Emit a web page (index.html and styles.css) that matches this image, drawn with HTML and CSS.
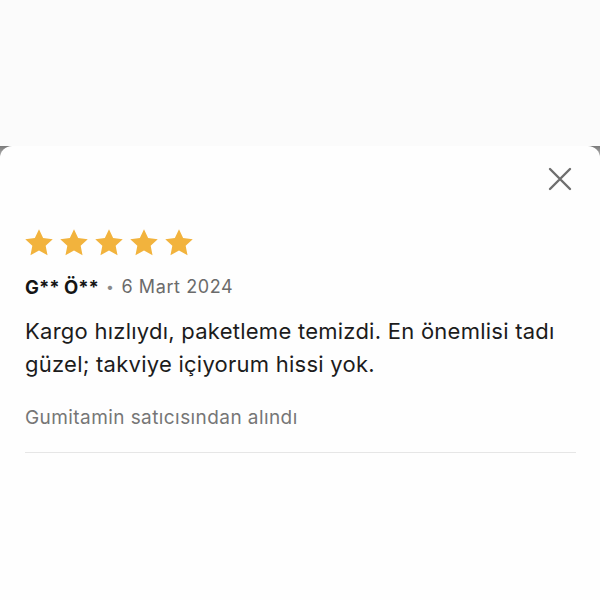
FILE: index.html
```html
<!DOCTYPE html>
<html lang="tr">

<head>
    <meta charset="UTF-8" />
    <meta name="viewport" content="width=device-width, initial-scale=1.0" />
    <title>Değerlendirme</title>
    <link rel="stylesheet" href="styles.css">
</head>

<body>
    <div class="backdrop"></div>

    <!-- Review Sheet -->
    <div class="sheet-frame">
        <div class="sheet">
            <div class="sheet-header">
                <button class="close-btn" aria-label="Kapat">
                    <svg width="24" height="24" viewBox="0 0 24 24">
                        <path d="M2 2 L22 22 M22 2 L2 22" stroke="#6e6e6e" stroke-width="2.4" stroke-linecap="round" fill="none" />
                    </svg>
                </button>
            </div>

            <div class="stars">
                <svg class="star" viewBox="0 0 24 24"><path d="M12 1.6l3.1 6.6 7.2.9-5.3 5 1.4 7.1L12 17.7l-6.4 3.5 1.4-7.1-5.3-5 7.2-.9z" /></svg>
                <svg class="star" viewBox="0 0 24 24"><path d="M12 1.6l3.1 6.6 7.2.9-5.3 5 1.4 7.1L12 17.7l-6.4 3.5 1.4-7.1-5.3-5 7.2-.9z" /></svg>
                <svg class="star" viewBox="0 0 24 24"><path d="M12 1.6l3.1 6.6 7.2.9-5.3 5 1.4 7.1L12 17.7l-6.4 3.5 1.4-7.1-5.3-5 7.2-.9z" /></svg>
                <svg class="star" viewBox="0 0 24 24"><path d="M12 1.6l3.1 6.6 7.2.9-5.3 5 1.4 7.1L12 17.7l-6.4 3.5 1.4-7.1-5.3-5 7.2-.9z" /></svg>
                <svg class="star" viewBox="0 0 24 24"><path d="M12 1.6l3.1 6.6 7.2.9-5.3 5 1.4 7.1L12 17.7l-6.4 3.5 1.4-7.1-5.3-5 7.2-.9z" /></svg>
            </div>

            <div class="review-meta">
                <span class="reviewer">G** Ö**</span>
                <span class="dot">•</span>
                <span class="review-date">6 Mart 2024</span>
            </div>

            <p class="review-text">Kargo hızlıydı, paketleme temizdi. En önemlisi tadı güzel; takviye içiyorum hissi yok.</p>

            <p class="seller">Gumitamin satıcısından alındı</p>

            <hr class="divider">
        </div>
    </div>
</body>

</html>
```

FILE: styles.css
```css
* {
    margin: 0;
    padding: 0;
    box-sizing: border-box;
}

html,
body {
    height: 100%;
}

body {
    background-color: #fbfbfb;
    color: #1c1c1c;
    font-family: "Inter", "Liberation Sans", sans-serif;
    display: flex;
    flex-direction: column;
}

.backdrop {
    height: 146px;
    flex-shrink: 0;
}


/* Sheet */

.sheet-frame {
    flex: 1;
    background: linear-gradient(to bottom, #7a7a7a 0, #b0b0b0 10px, #fbfbfb 14px);
}

.sheet {
    height: 100%;
    background-color: #fefefe;
    border-radius: 12px 12px 0 0;
    padding: 21px 24px 0 25px;
}

.sheet-header {
    display: flex;
    justify-content: flex-end;
}

.close-btn {
    background: none;
    border: none;
    width: 24px;
    height: 24px;
    margin-right: 4px;
    cursor: pointer;
}

.close-btn svg {
    display: block;
}


/* Stars */

.stars {
    display: flex;
    gap: 3px;
    margin-top: 36px;
    margin-left: -2px;
}

.star {
    width: 32px;
    height: 32px;
    fill: #f2b33d;
}


/* Meta + text */

.review-meta {
    margin-top: 15px;
    font-size: 18px;
    line-height: 26px;
    letter-spacing: 0.6px;
    display: flex;
    align-items: center;
    gap: 7px;
}

.reviewer {
    font-weight: 700;
    font-size: 18.5px;
    color: #151515;
    letter-spacing: 0;
}

.dot {
    color: #8a8a8a;
    font-size: 14px;
}

.review-date {
    color: #6b6b6b;
}

.review-text {
    margin-top: 15px;
    font-size: 22px;
    line-height: 33px;
    letter-spacing: 0.25px;
    color: #1c1c1c;
}

.seller {
    margin-top: 24px;
    font-size: 19px;
    line-height: 26px;
    letter-spacing: 0.42px;
    color: #767676;
}

.divider {
    margin-top: 21px;
    border: none;
    border-top: 1.5px solid #e6e6e6;
}
```
